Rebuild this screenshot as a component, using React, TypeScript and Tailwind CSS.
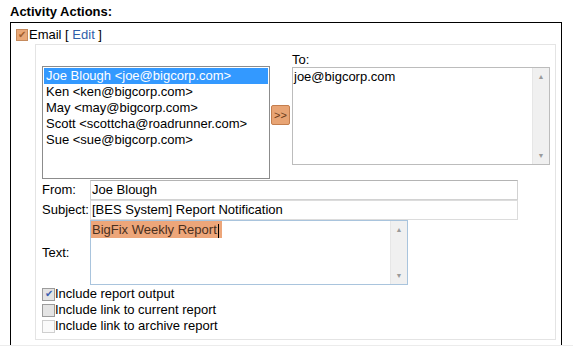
const recipients = [
    "Joe Blough <joe@bigcorp.com>",
    "Ken <ken@bigcorp.com>",
    "May <may@bigcorp.com>",
    "Scott <scottcha@roadrunner.com>",
    "Sue <sue@bigcorp.com>",
];

function Scrollbar() {
    return (
        <div className="flex w-[17px] flex-col justify-between border-l border-[#e6e6e6] bg-[#f0f0f0] text-[7px] leading-none text-[#9a9a9a]">
            <div className="flex h-[17px] items-center justify-center">▲</div>
            <div className="flex h-[17px] items-center justify-center">▼</div>
        </div>
    );
}

function Check({ checked, faded }: { checked?: boolean; faded?: boolean }) {
    return (
        <span
            className={
                "flex h-[13px] w-[13px] items-center justify-center border text-[10px] leading-none " +
                (faded ? "border-[#cfcfcf] bg-[#fafafa]" : "border-[#9c9c9c] bg-[#e4e4e4]")
            }
        >
            {checked ? <span className="text-[#3a5fb0]">✔</span> : null}
        </span>
    );
}

export default function App() {
    return (
        <div className="h-[346px] w-[573px] overflow-hidden border-b border-[#ececec] bg-white text-[13px] leading-[16px] text-black [font-family:'Liberation_Sans',Arial,sans-serif]">
            <div className="pl-[10px] pt-[4px] font-bold">Activity Actions:</div>
            <div className="ml-[10px] mt-[2px] h-[330px] w-[552px] border-x border-t border-black">
                <div className="flex items-center pl-[5px] pt-[4px]">
                    <span className="flex h-[12px] w-[12px] items-center justify-center border border-[#c58a5c] bg-[#e9a877] text-[10px] leading-none text-[#a25e2c]">
                        ✔
                    </span>
                    <span className="ml-[1px]">
                        Email [ <span className="text-[#2f5ea8]">Edit</span> ]
                    </span>
                </div>
                <div className="ml-[24px] mt-[1px] h-[296px] w-[521px] border border-[#e4e4e4] pl-[6px]">
                    <div className="flex items-start">
                        <div className="mt-[21px] h-[113px] w-[228px] border border-[#8c8c8c] px-[1px] pt-[1px]">
                            {recipients.map((r, i) => (
                                <div
                                    key={r}
                                    className={
                                        "h-[16px] pl-[2px] " + (i === 0 ? "bg-[#3399ff] text-white" : "")
                                    }
                                >
                                    {r}
                                </div>
                            ))}
                        </div>
                        <button className="ml-[1px] mt-[60px] flex h-[20px] w-[19px] items-center justify-center rounded-[2px] border border-[#c47e4e] bg-[#e8a474] text-[11px] leading-none text-[#6b3a18]">
                            &gt;&gt;
                        </button>
                        <div className="ml-[2px] mt-[7px]">
                            <div className="h-[15px] leading-[15px]">To:</div>
                            <div className="flex h-[98px] w-[258px] border border-[#bcbcbc]">
                                <div className="flex-1 pl-[1px] pt-[1px]">joe@bigcorp.com</div>
                                <Scrollbar />
                            </div>
                        </div>
                    </div>
                    <div className="mt-[1px] grid grid-cols-[48px_1fr]">
                        <div className="pt-[2px]">From:</div>
                        <div className="h-[20px] w-[428px] border border-[#d2d2d2] border-t-[#b4b4b4] pl-[1px] leading-[18px]">
                            Joe Blough
                        </div>
                        <div className="pt-[2px]">Subject:</div>
                        <div className="h-[20px] w-[428px] border border-[#dcdcdc] pl-[1px] leading-[18px]">
                            [BES System] Report Notification
                        </div>
                        <div className="flex items-center">Text:</div>
                        <div className="flex h-[65px] w-[318px] border border-[#a9c4dd]">
                            <div className="flex-1">
                                <span className="inline-block bg-[#eda67a] pl-[1px] pr-[3px] leading-[17px] text-[#4a3020]">
                                    BigFix Weekly Report<span className="ml-[1px] inline-block h-[14px] w-px bg-black align-middle"></span>
                                </span>
                            </div>
                            <Scrollbar />
                        </div>
                    </div>
                    <div className="mt-[1px] flex flex-col">
                        <label className="flex h-[16px] items-center">
                            <Check checked />
                            <span>Include report output</span>
                        </label>
                        <label className="flex h-[16px] items-center">
                            <Check />
                            <span>Include link to current report</span>
                        </label>
                        <label className="flex h-[16px] items-center">
                            <Check faded />
                            <span>Include link to archive report</span>
                        </label>
                    </div>
                </div>
            </div>
        </div>
    );
}
